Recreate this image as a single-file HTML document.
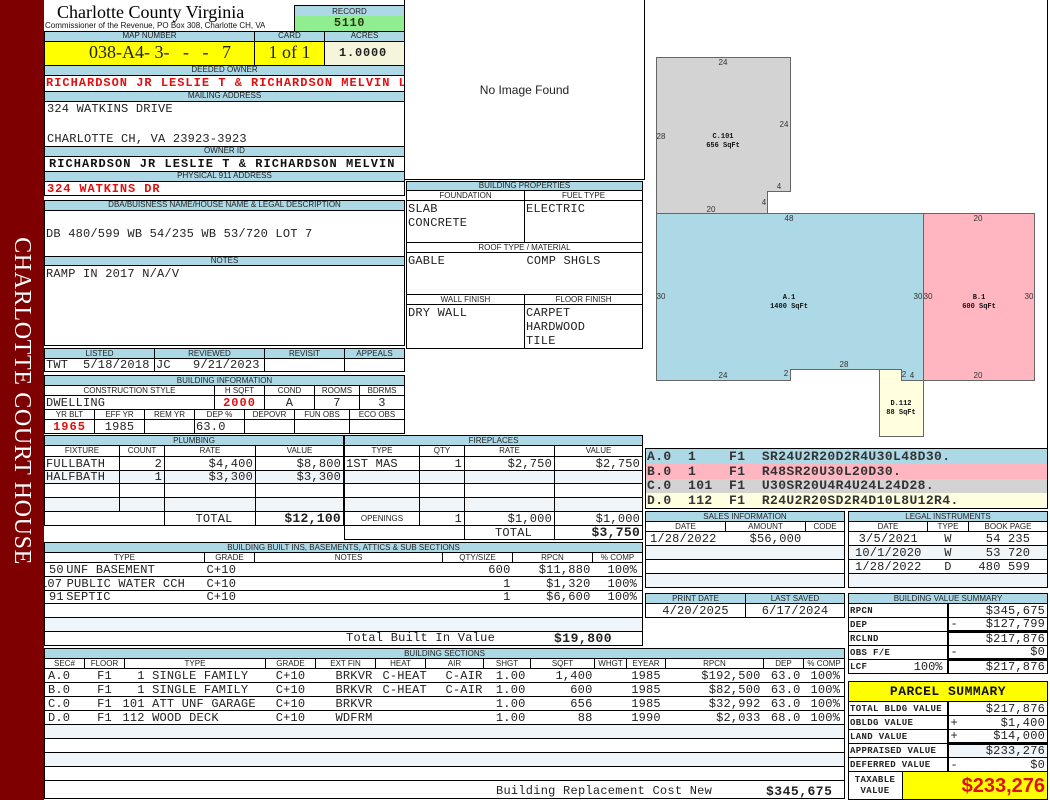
<!DOCTYPE html>
<html><head><meta charset="utf-8"><style>
html,body{margin:0;padding:0;background:#fff;width:1050px;height:800px;overflow:hidden}
body{position:relative;font-family:"Liberation Mono",monospace;font-size:12px;color:#222}
.a,.h,.v,table{position:absolute}
.a{white-space:pre;overflow:hidden}
.h,.v{box-sizing:border-box;border:1px solid #000;white-space:pre;overflow:hidden}
.h{background:#add8e6;font:8px/8px "Liberation Sans",sans-serif;text-align:center;color:#222}
.v{background:#fff;line-height:13px;letter-spacing:.2px;padding-left:2px}
.bd{font-weight:bold;font-size:12px;letter-spacing:1.05px}
table{border-collapse:collapse;table-layout:fixed;letter-spacing:.2px}
td{border:1px solid #000;padding:0 2px;line-height:12px;white-space:pre;overflow:hidden;background:#fff;color:#222}
td.h2{background:#add8e6;font:8px/8px "Liberation Sans",sans-serif;text-align:center;letter-spacing:0;padding:0}
td.l{font:8px/8px "Liberation Sans",sans-serif;text-align:center;letter-spacing:0;padding:0}
.r{text-align:right}.c{text-align:center}
.z td{background:#f0f5fa}
.n td{border-left:0;border-right:0}
.n td:first-child{border-left:1px solid #000}
.n td:last-child{border-right:1px solid #000}
b.t{font-size:13px;letter-spacing:.3px}
td.s{font-weight:bold;font-size:9px;letter-spacing:.35px;padding-left:1px}
td.p{vertical-align:top;line-height:14px;padding:1px 1px 0}
i{font-style:normal;float:left}
.g{margin-right:-5px}
.k2{padding-right:5px;text-align:right}
.ex{padding-right:3px;text-align:right}
.sh{padding-right:5px;text-align:right}
.dp{padding-right:3px;text-align:right}
.pc{padding-right:4px;text-align:right}
.ty{padding:0;text-indent:-2px;overflow:visible}
svg text{font-family:"Liberation Sans",sans-serif;font-size:8px;text-anchor:middle;fill:#333}
svg text.k{font-family:"Liberation Mono",monospace;font-weight:bold;font-size:7px;fill:#111}
</style></head><body>
<div class="a" style="left:0;top:0;width:44px;height:800px;background:#7f0000;z-index:5"></div>
<div class="a" style="left:22px;top:401px;z-index:6;color:#fff;font:24px/26px 'Liberation Serif',serif;letter-spacing:.65px;transform:translate(-50%,-50%) rotate(90deg);overflow:visible">CHARLOTTE COURT HOUSE</div>

<div class="a" style="left:57px;top:1px;font:18px/22px 'Liberation Serif',serif;color:#000">Charlotte County Virginia</div>
<div class="a" style="left:45px;top:20px;font:8px/11px 'Liberation Sans',sans-serif;color:#111">Commissioner of the Revenue, PO Box 308, Charlotte CH, VA</div>

<div class="h" style="left:294px;top:5px;width:111px;height:13px;border-bottom:0;line-height:12px">RECORD</div>
<div class="a" style="left:294px;top:16px;width:111px;height:15px;background:#90ee90;border-left:1px solid #000;border-right:1px solid #000;box-sizing:border-box;text-align:center;font-weight:bold;font-size:12px;line-height:15px;letter-spacing:.6px;color:#2a3a10">5110</div>

<div class="h" style="left:44px;top:31px;width:211px;height:11px">MAP NUMBER</div>
<div class="h" style="left:254px;top:31px;width:71px;height:11px">CARD</div>
<div class="h" style="left:324px;top:31px;width:81px;height:11px">ACRES</div>
<div class="v" style="left:44px;top:41px;width:211px;height:25px;background:#ffff00;font:18px/21px 'Liberation Serif',serif;text-align:center;color:#222;padding:0 0 0 21px;letter-spacing:0">038-A4- 3-   -   -   7</div>
<div class="v" style="left:254px;top:41px;width:71px;height:25px;background:#ffff00;font:18px/21px 'Liberation Serif',serif;text-align:center;color:#222;padding:0;letter-spacing:0">1 of 1</div>
<div class="v bd" style="left:324px;top:41px;width:81px;height:25px;background:#f5f5dc;line-height:23px;text-align:center;letter-spacing:.8px;padding:0 3px 0 0">1.0000</div>

<div class="h" style="left:44px;top:65px;width:361px;height:11px">DEEDED OWNER</div>
<div class="v bd" style="left:44px;top:75px;width:361px;height:17px;color:#e01010;letter-spacing:1px;line-height:15px;padding-left:1px">RICHARDSON JR LESLIE T &amp; RICHARDSON MELVIN L</div>
<div class="h" style="left:44px;top:91px;width:361px;height:11px">MAILING ADDRESS</div>
<div class="v" style="left:44px;top:101px;width:361px;height:46px;line-height:15px;padding:0 0 0 2px">324 WATKINS DRIVE

CHARLOTTE CH, VA 23923-3923</div>
<div class="h" style="left:44px;top:146px;width:361px;height:11px">OWNER ID</div>
<div class="v bd" style="left:44px;top:156px;width:361px;height:16px;line-height:14px;padding-left:4px;color:#111">RICHARDSON JR LESLIE T &amp; RICHARDSON MELVIN</div>
<div class="h" style="left:44px;top:171px;width:361px;height:11px">PHYSICAL 911 ADDRESS</div>
<div class="v bd" style="left:44px;top:181px;width:361px;height:15px;line-height:14px;color:#e01010;padding-left:2px;letter-spacing:.9px">324 WATKINS DR</div>

<div class="h" style="left:44px;top:200px;width:361px;height:11px">DBA/BUISNESS NAME/HOUSE NAME &amp; LEGAL DESCRIPTION</div>
<div class="v" style="left:44px;top:210px;width:361px;height:47px;line-height:15px;padding:16px 0 0 1px">DB 480/599 WB 54/235 WB 53/720 LOT 7</div>
<div class="h" style="left:44px;top:256px;width:361px;height:10px">NOTES</div>
<div class="v" style="left:44px;top:265px;width:361px;height:81px;line-height:15px;padding:1px 0 0 1px">RAMP IN 2017 N/A/V</div>

<table style="left:44px;top:348px;width:360px"><col width="110"><col width="110"><col width="80"><col width="60">
<tr style="height:10px"><td class="h2">LISTED</td><td class="h2">REVIEWED</td><td class="h2">REVISIT</td><td class="h2">APPEALS</td></tr>
<tr style="height:13px"><td style="padding-left:1px">TWT  5/18/2018</td><td style="padding-left:1px">JC   9/21/2023</td><td></td><td></td></tr></table>

<table style="left:44px;top:375px;width:360px"><col width="170"><col width="50"><col width="50"><col width="45"><col width="45">
<tr style="height:10px"><td class="h2" colspan="5">BUILDING INFORMATION</td></tr>
<tr style="height:10px"><td class="l">CONSTRUCTION STYLE</td><td class="l">H SQFT</td><td class="l">COND</td><td class="l">ROOMS</td><td class="l">BDRMS</td></tr>
<tr style="height:14px"><td style="padding-left:1px">DWELLING</td><td class="c" style="color:#e01010;font-weight:bold;letter-spacing:1px">2000</td><td class="c">A</td><td class="c">7</td><td class="c">3</td></tr></table>
<table style="left:44px;top:409px;width:360px"><col width="50"><col width="50"><col width="50"><col width="50"><col width="50"><col width="55"><col width="55">
<tr style="height:10px"><td class="l">YR BLT</td><td class="l">EFF YR</td><td class="l">REM YR</td><td class="l">DEP %</td><td class="l">DEPOVR</td><td class="l">FUN OBS</td><td class="l">ECO OBS</td></tr>
<tr style="height:14px"><td class="c" style="color:#e01010;font-weight:bold;letter-spacing:1px">1965</td><td class="c">1985</td><td></td><td style="padding-left:1px">63.0</td><td></td><td></td><td></td></tr></table>

<div class="a" style="left:404px;top:0;width:241px;height:180px;border-left:1px solid #000;border-right:1px solid #000;border-bottom:1px solid #000;box-sizing:border-box;text-align:center;font:12px/180px 'Liberation Sans',sans-serif;color:#222">No Image Found</div>
<div class="a" style="left:1047px;top:0;width:1px;height:449px;background:#000"></div>

<table style="left:406px;top:181px;width:236px"><col width="118"><col width="118">
<tr style="height:9px"><td class="h2" colspan="2">BUILDING PROPERTIES</td></tr>
<tr style="height:10px"><td class="l">FOUNDATION</td><td class="l">FUEL TYPE</td></tr>
<tr style="height:42px"><td class="p">SLAB
CONCRETE</td><td class="p">ELECTRIC</td></tr>
<tr style="height:10px"><td class="l" colspan="2">ROOF TYPE / MATERIAL</td></tr>
<tr class="n" style="height:42px"><td class="p">GABLE</td><td class="p" style="padding-left:2px">COMP SHGLS</td></tr>
<tr style="height:10px"><td class="l">WALL FINISH</td><td class="l">FLOOR FINISH</td></tr>
<tr style="height:42px"><td class="p">DRY WALL</td><td class="p">CARPET
HARDWOOD
TILE</td></tr></table>

<svg class="a" style="left:645px;top:0;overflow:visible" width="402" height="449" viewBox="645 0 402 449">
<g stroke="#666" stroke-width="1">
<path fill="#d3d3d3" d="M656.5 57.5H790.5V191.5H767.5V213.5H656.5Z"/>
<path fill="#add8e6" d="M656.5 213.5H923.5V380.5H901.5V369.5H790.5V380.5H656.5Z"/>
<path fill="#ffb6c1" d="M923.5 213.5H1034.5V380.5H923.5Z"/>
<path fill="#ffffe0" d="M879.5 369.5H901.5V380.5H923.5V436.5H879.5Z"/>
</g>
<g>
<text x="723" y="65">24</text><text x="661" y="139">28</text><text x="784" y="127">24</text><text x="779" y="189">4</text><text x="764" y="205">4</text><text x="711" y="212">20</text>
<text x="789" y="221">48</text><text x="978" y="221">20</text><text x="661" y="299">30</text><text x="918" y="299">30</text><text x="928" y="299">30</text><text x="1029" y="299">30</text>
<text x="723" y="378">24</text><text x="786" y="376">2</text><text x="844" y="367">28</text><text x="904" y="377">2</text><text x="912" y="378">4</text><text x="978" y="378">20</text>
<text class="k" x="723" y="138">C.101</text><text class="k" x="723" y="147">656 SqFt</text>
<text class="k" x="789" y="299">A.1</text><text class="k" x="789" y="308">1400 SqFt</text>
<text class="k" x="979" y="299">B.1</text><text class="k" x="979" y="308">600 SqFt</text>
<text class="k" x="901" y="405">D.112</text><text class="k" x="901" y="414">88 SqFt</text>
</g></svg>

<div class="a" style="left:645px;top:448px;width:403px;height:61px;border:1px solid #000;box-sizing:border-box;background:#ffffe0"></div>
<div class="a" style="left:646px;top:449px;width:401px;height:15px;padding-left:1px;box-sizing:border-box;background:#add8e6;font-weight:bold;font-size:13px;line-height:15px;letter-spacing:.4px;color:#333">A.0  1    F1  SR24U2R20D2R4U30L48D30.</div>
<div class="a" style="left:646px;top:464px;width:401px;height:15px;padding-left:1px;box-sizing:border-box;background:#ffb6c1;font-weight:bold;font-size:13px;line-height:15px;letter-spacing:.4px;color:#333">B.0  1    F1  R48SR20U30L20D30.</div>
<div class="a" style="left:646px;top:479px;width:401px;height:14px;padding-left:1px;box-sizing:border-box;background:#d3d3d3;font-weight:bold;font-size:13px;line-height:14px;letter-spacing:.4px;color:#333">C.0  101  F1  U30SR20U4R4U24L24D28.</div>
<div class="a" style="left:646px;top:493px;width:401px;height:15px;padding-left:1px;box-sizing:border-box;background:#ffffe0;font-weight:bold;font-size:13px;line-height:15px;letter-spacing:.4px;color:#333">D.0  112  F1  R24U2R20SD2R4D10L8U12R4.</div>

<table style="left:645px;top:511px;width:199px"><col width="80"><col width="80"><col width="39">
<tr style="height:10px"><td class="h2" colspan="3">SALES INFORMATION</td></tr>
<tr style="height:10px"><td class="l">DATE</td><td class="l">AMOUNT</td><td class="l">CODE</td></tr>
<tr class="n" style="height:14px"><td class="c" style="padding-right:7px">1/28/2022</td><td class="c" style="padding-left:22px">$56,000</td><td></td></tr>
<tr class="z" style="height:14px"><td colspan="3"></td></tr>
<tr style="height:14px"><td colspan="3"></td></tr>
<tr class="z" style="height:14px"><td colspan="3"></td></tr></table>

<table style="left:848px;top:511px;width:199px"><col width="79"><col width="41"><col width="79">
<tr style="height:10px"><td class="h2" colspan="3">LEGAL INSTRUMENTS</td></tr>
<tr style="height:10px"><td class="l">DATE</td><td class="l">TYPE</td><td class="l">BOOK PAGE</td></tr>
<tr class="n" style="height:14px"><td class="c">3/5/2021</td><td class="c">W</td><td class="r">54 235  </td></tr>
<tr class="n z" style="height:14px"><td class="c">10/1/2020</td><td class="c">W</td><td class="r">53 720  </td></tr>
<tr class="n" style="height:14px"><td class="c">1/28/2022</td><td class="c">D</td><td class="r">480 599  </td></tr>
<tr class="n z" style="height:14px"><td></td><td></td><td></td></tr></table>

<table style="left:645px;top:593px;width:199px"><col width="100"><col width="99">
<tr style="height:10px"><td class="h2">PRINT DATE</td><td class="h2">LAST SAVED</td></tr>
<tr style="height:14px"><td class="c">4/20/2025</td><td class="c">6/17/2024</td></tr></table>

<table style="left:848px;top:593px;width:199px"><col width="99"><col width="100">
<tr style="height:10px"><td class="h2" colspan="2">BUILDING VALUE SUMMARY</td></tr>
<tr style="height:14px"><td class="s">RPCN</td><td class="r" style="border-left:2px solid #000">$345,675</td></tr>
<tr style="height:14px"><td class="s">DEP</td><td class="r" style="border-left:2px solid #000;border-bottom:3px solid #000"><i>-</i>$127,799</td></tr>
<tr style="height:13px"><td class="s">RCLND</td><td class="r" style="border-left:2px solid #000">$217,876</td></tr>
<tr style="height:14px"><td class="s">OBS F/E</td><td class="r" style="border-left:2px solid #000;border-bottom:3px solid #000"><i>-</i>$0</td></tr>
<tr style="height:14px"><td class="s">LCF<span style="float:right;font-weight:normal;font-size:12px;letter-spacing:0;margin-right:2px">100%</span></td><td class="r" style="border-left:2px solid #000">$217,876</td></tr></table>

<table style="left:848px;top:681px;width:199px"><col width="54"><col width="45"><col width="100">
<tr style="height:20px"><td colspan="3" class="c" style="background:#ffff00;font-weight:bold;font-size:13px;letter-spacing:.5px;color:#111">PARCEL SUMMARY</td></tr>
<tr style="height:14px"><td class="s" colspan="2">TOTAL BLDG VALUE</td><td class="r" style="border-left:2px solid #000">$217,876</td></tr>
<tr style="height:14px"><td class="s" colspan="2">OBLDG VALUE</td><td class="r" style="border-left:2px solid #000"><i>+</i>$1,400</td></tr>
<tr style="height:14px"><td class="s" colspan="2">LAND VALUE</td><td class="r" style="border-left:2px solid #000;border-bottom:3px solid #000"><i>+</i>$14,000</td></tr>
<tr style="height:14px"><td class="s" colspan="2">APPRAISED VALUE</td><td class="r" style="border-left:2px solid #000;background:#f0f5fa">$233,276</td></tr>
<tr style="height:14px"><td class="s" colspan="2">DEFERRED VALUE</td><td class="r" style="border-left:2px solid #000"><i>-</i>$0</td></tr>
<tr style="height:28px"><td class="s c" style="line-height:11px;letter-spacing:.4px">TAXABLE
VALUE</td><td colspan="2" class="r" style="background:#ffff00;color:#e01010;font:bold 20px/26px 'Liberation Sans',sans-serif;letter-spacing:0">$233,276</td></tr></table>

<table style="left:44px;top:435px;width:299px"><col width="75"><col width="45"><col width="91"><col width="88">
<tr style="height:10px"><td class="h2" colspan="4">PLUMBING</td></tr>
<tr style="height:11px"><td class="l">FIXTURE</td><td class="l">COUNT</td><td class="l">RATE</td><td class="l">VALUE</td></tr>
<tr style="height:14px"><td style="padding-left:1px">FULLBATH</td><td class="r">2</td><td class="r">$4,400</td><td class="r">$8,800</td></tr>
<tr class="z" style="height:13px"><td style="padding-left:1px">HALFBATH</td><td class="r">1</td><td class="r">$3,300</td><td class="r">$3,300</td></tr>
<tr style="height:14px"><td></td><td></td><td></td><td></td></tr>
<tr class="z" style="height:14px"><td></td><td></td><td></td><td></td></tr>
<tr style="height:14px"><td colspan="2"></td><td class="c" style="padding-left:10px">TOTAL</td><td class="r"><b class="t">$12,100</b></td></tr></table>

<table style="left:344px;top:435px;width:298px"><col width="75"><col width="45"><col width="90"><col width="88">
<tr style="height:10px"><td class="h2" colspan="4">FIREPLACES</td></tr>
<tr style="height:11px"><td class="l">TYPE</td><td class="l">QTY</td><td class="l">RATE</td><td class="l">VALUE</td></tr>
<tr style="height:14px"><td style="padding-left:1px">1ST MAS</td><td class="r">1</td><td class="r">$2,750</td><td class="r">$2,750</td></tr>
<tr class="z" style="height:13px"><td></td><td></td><td></td><td></td></tr>
<tr style="height:14px"><td></td><td></td><td></td><td></td></tr>
<tr class="z" style="height:14px"><td></td><td></td><td></td><td></td></tr>
<tr style="height:14px"><td class="l">OPENINGS</td><td class="r">1</td><td class="r">$1,000</td><td class="r">$1,000</td></tr>
<tr style="height:14px"><td colspan="2"></td><td class="c" style="padding-left:10px">TOTAL</td><td class="r"><b class="t">$3,750</b></td></tr></table>

<table style="left:44px;top:542px;width:598px"><col width="160"><col width="50"><col width="188"><col width="70"><col width="80"><col width="50">
<tr style="height:10px"><td class="h2" colspan="6">BUILDING BUILT INS, BASEMENTS, ATTICS &amp; SUB SECTIONS</td></tr>
<tr style="height:10px"><td class="l">TYPE</td><td class="l">GRADE</td><td class="l">NOTES</td><td class="l">QTY/SIZE</td><td class="l">RPCN</td><td class="l">% COMP</td></tr>
<tr class="n" style="height:14px"><td style="padding-left:4px"><span class="g">50 </span>UNF BASEMENT</td><td>C+10</td><td></td><td class="r">600</td><td class="r">$11,880</td><td class="k2">100%</td></tr>
<tr class="n" style="height:14px"><td style="padding-left:4px;text-indent:-10px"><span style="margin-right:-3px">107 </span>PUBLIC WATER CCH</td><td>C+10</td><td></td><td class="r">1</td><td class="r">$1,320</td><td class="k2">100%</td></tr>
<tr class="n" style="height:13px"><td style="padding-left:4px"><span class="g">91 </span>SEPTIC</td><td>C+10</td><td></td><td class="r">1</td><td class="r">$6,600</td><td class="k2">100%</td></tr>
<tr style="height:14px"><td colspan="6"></td></tr>
<tr class="z" style="height:14px"><td colspan="6"></td></tr>
<tr style="height:14px"><td colspan="6"></td></tr></table>
<div class="a" style="left:346px;top:632px;font-size:12px;line-height:13px;letter-spacing:.25px">Total Built In Value</div>
<div class="a" style="left:554px;top:632px;line-height:13px;font-weight:bold;font-size:13px;letter-spacing:.5px">$19,800</div>

<table style="left:44px;top:648px;width:800px"><col width="40"><col width="40"><col width="141"><col width="50"><col width="60"><col width="50"><col width="58"><col width="47"><col width="64"><col width="32"><col width="39"><col width="98"><col width="40"><col width="41">
<tr style="height:10px"><td class="h2" colspan="14">BUILDING SECTIONS</td></tr>
<tr style="height:10px"><td class="l">SEC#</td><td class="l">FLOOR</td><td class="l">TYPE</td><td class="l">GRADE</td><td class="l">EXT FIN</td><td class="l">HEAT</td><td class="l">AIR</td><td class="l">SHGT</td><td class="l">SQFT</td><td class="l">WHGT</td><td class="l">EYEAR</td><td class="l">RPCN</td><td class="l">DEP</td><td class="l">% COMP</td></tr>
<tr class="n" style="height:14px"><td style="padding-left:3px">A.0</td><td class="c">F1</td><td class="ty">  1 SINGLE FAMILY</td><td class="c">C+10</td><td class="ex">BRKVR</td><td style="overflow:visible;padding-left:7px">C-HEAT</td><td class="r" style="padding-right:1px">C-AIR</td><td class="sh">1.00</td><td class="r">1,400</td><td></td><td class="c">1985</td><td class="ex">$192,500</td><td class="dp">63.0</td><td class="pc">100%</td></tr>
<tr class="n" style="height:14px"><td style="padding-left:3px">B.0</td><td class="c">F1</td><td class="ty">  1 SINGLE FAMILY</td><td class="c">C+10</td><td class="ex">BRKVR</td><td style="overflow:visible;padding-left:7px">C-HEAT</td><td class="r" style="padding-right:1px">C-AIR</td><td class="sh">1.00</td><td class="r">600</td><td></td><td class="c">1985</td><td class="ex">$82,500</td><td class="dp">63.0</td><td class="pc">100%</td></tr>
<tr class="n" style="height:14px"><td style="padding-left:3px">C.0</td><td class="c">F1</td><td class="ty">101 ATT UNF GARAGE</td><td class="c">C+10</td><td class="ex">BRKVR</td><td></td><td></td><td class="sh">1.00</td><td class="r">656</td><td></td><td class="c">1985</td><td class="ex">$32,992</td><td class="dp">63.0</td><td class="pc">100%</td></tr>
<tr class="n" style="height:14px"><td style="padding-left:3px">D.0</td><td class="c">F1</td><td class="ty">112 WOOD DECK</td><td class="c">C+10</td><td class="ex">WDFRM</td><td></td><td></td><td class="sh">1.00</td><td class="r">88</td><td></td><td class="c">1990</td><td class="ex">$2,033</td><td class="dp">68.0</td><td class="pc">100%</td></tr>
<tr class="z" style="height:14px"><td colspan="14"></td></tr>
<tr style="height:14px"><td colspan="14"></td></tr>
<tr class="z" style="height:14px"><td colspan="14"></td></tr>
<tr style="height:14px"><td colspan="14"></td></tr>
<tr style="height:18px"><td colspan="14"></td></tr></table>
<div class="a" style="left:496px;top:785px;font-size:12px;line-height:13px;letter-spacing:.25px">Building Replacement Cost New</div>
<div class="a" style="left:766px;top:785px;line-height:13px;font-weight:bold;font-size:13px;letter-spacing:.5px">$345,675</div>
</body></html>
